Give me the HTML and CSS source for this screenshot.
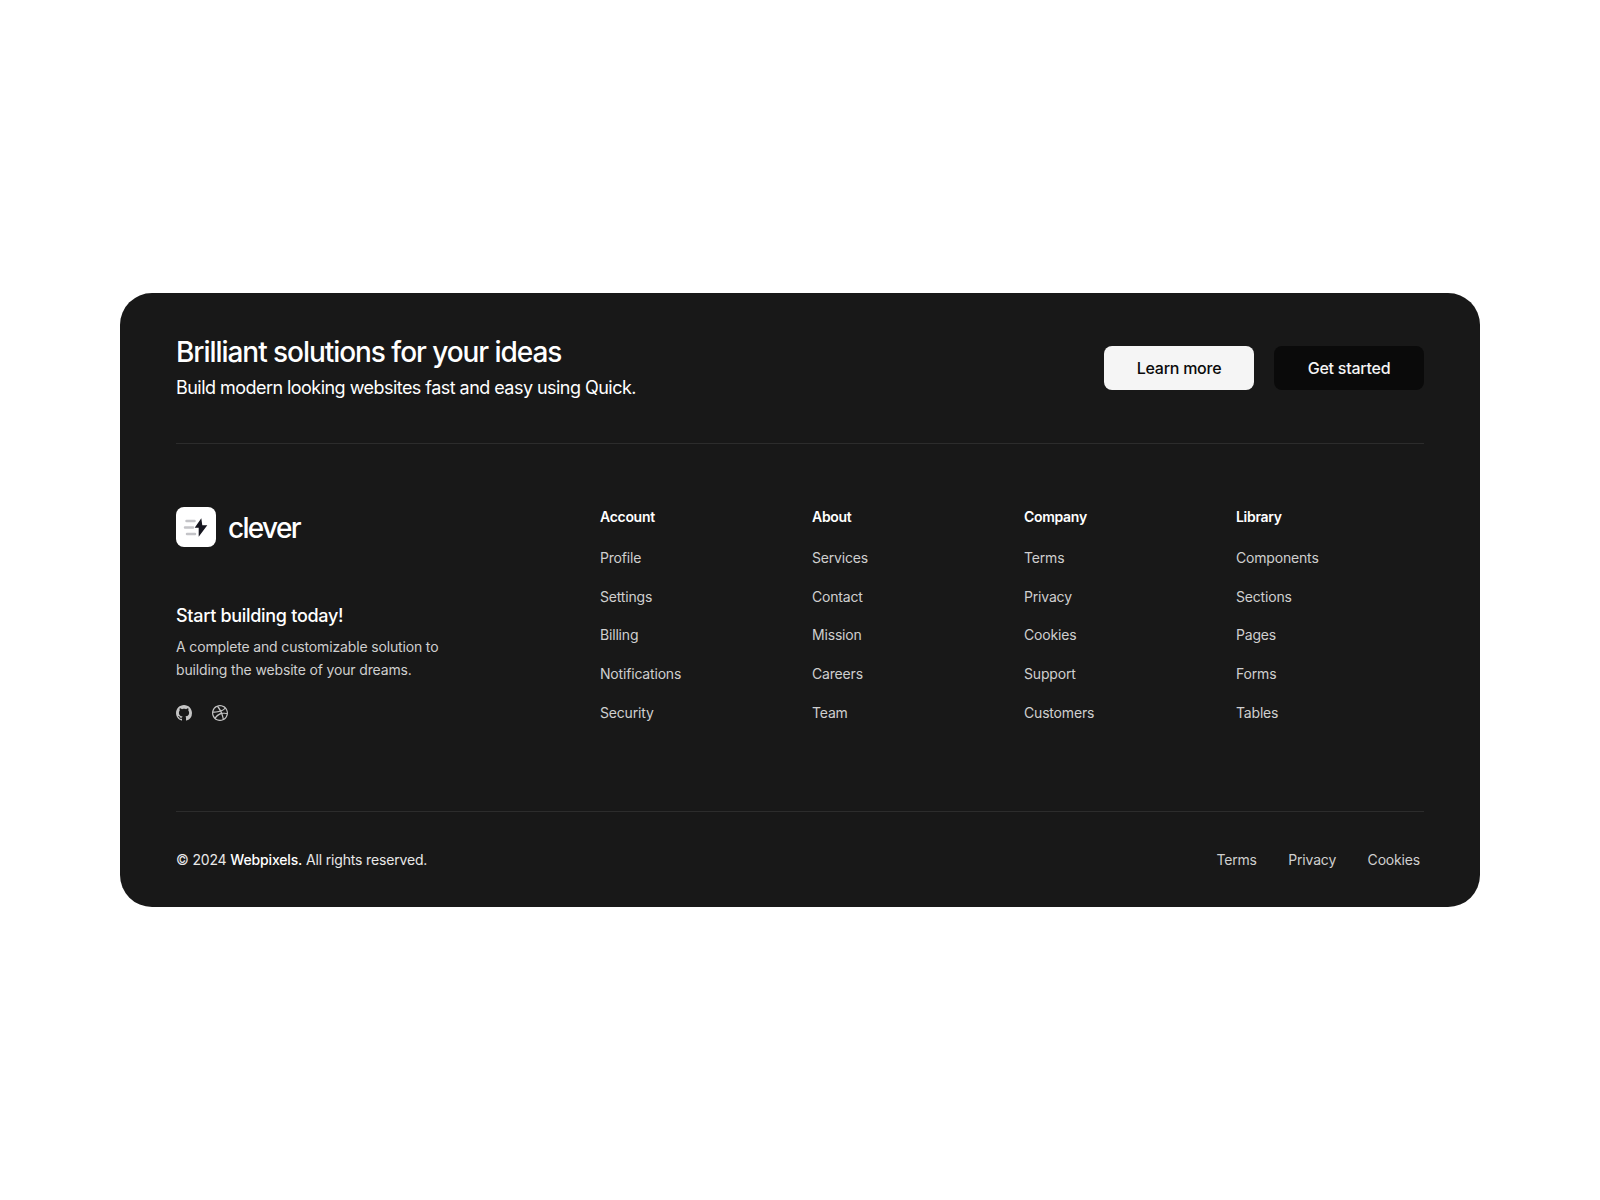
FILE: index.html
```html
<!DOCTYPE html>
<html lang="en">
<head>
<meta charset="utf-8">
<title>Footer</title>
<link rel="stylesheet" href="styles.css">
</head>
<body>
<footer class="card">
  <section class="cta">
    <div>
      <h2 class="cta-title">Brilliant solutions for your ideas</h2>
      <p class="cta-sub">Build modern looking websites fast and easy using Quick.</p>
    </div>
    <div class="cta-actions">
      <a class="btn btn-light">Learn more</a>
      <a class="btn btn-dark">Get started</a>
    </div>
  </section>
  <section class="main">
    <div class="brand">
      <div class="logo">
        <span class="logo-mark">
          <svg width="40" height="40" viewBox="0 0 40 40">
            <path d="M10.5 14h8M9 20.5h8M11 27h8" stroke="#c4c4c8" stroke-width="2.5" fill="none" stroke-linecap="round"/>
            <path d="M25.3 11.3 18.7 20.7h4V29.7L31.3 18.3h-5z" fill="#16161f"/>
          </svg>
        </span>
        <span class="logo-text">clever</span>
      </div>
      <h3 class="brand-title">Start building today!</h3>
      <p class="brand-text">A complete and customizable solution to<br>building the website of your dreams.</p>
      <div class="socials">
        <svg width="16" height="16" viewBox="0 0 16 16" fill="#c4c4c4"><path d="M8 0C3.58 0 0 3.58 0 8c0 3.54 2.29 6.53 5.47 7.59.4.07.55-.17.55-.38 0-.19-.01-.82-.01-1.49-2.01.37-2.53-.49-2.69-.94-.09-.23-.48-.94-.82-1.13-.28-.15-.68-.52-.01-.53.63-.01 1.08.58 1.23.82.72 1.21 1.87.87 2.33.66.07-.52.28-.87.51-1.07-1.78-.2-3.64-.89-3.64-3.95 0-.87.31-1.59.82-2.15-.08-.2-.36-1.02.08-2.12 0 0 .67-.21 2.2.82.64-.18 1.32-.27 2-.27.68 0 1.36.09 2 .27 1.53-1.04 2.2-.82 2.2-.82.44 1.1.16 1.92.08 2.12.51.56.82 1.27.82 2.15 0 3.07-1.87 3.75-3.65 3.95.29.25.54.73.54 1.48 0 1.07-.01 1.93-.01 2.2 0 .21.15.46.55.38A8.01 8.01 0 0 0 16 8c0-4.42-3.58-8-8-8z"/></svg>
        <svg width="16" height="16" viewBox="0 0 16 16" fill="#c4c4c4"><path fill-rule="evenodd" d="M8 0C3.584 0 0 3.584 0 8s3.584 8 8 8c4.408 0 8-3.584 8-8s-3.592-8-8-8zm5.284 3.688a6.802 6.802 0 0 1 1.545 4.251c-.226-.043-2.482-.503-4.755-.217-.052-.112-.096-.234-.148-.355-.139-.33-.295-.668-.451-.99 2.516-1.023 3.662-2.498 3.81-2.69zM8 1.18c1.735 0 3.323.65 4.53 1.718-.122.174-1.155 1.553-3.584 2.464-1.12-2.056-2.36-3.74-2.551-4A6.95 6.95 0 0 1 8 1.18zm-2.907.642A43.123 43.123 0 0 1 7.627 5.77c-3.193.85-6.013.833-6.317.833a6.865 6.865 0 0 1 3.783-4.78zM1.163 8.01V7.8c.295.01 3.61.053 7.02-.971.199.381.381.772.555 1.162l-.27.078c-3.522 1.137-5.396 4.243-5.553 4.504a6.817 6.817 0 0 1-1.752-4.564zM8 14.837a6.785 6.785 0 0 1-4.19-1.44c.12-.252 1.509-2.924 5.361-4.269.018-.009.026-.009.044-.017a28.246 28.246 0 0 1 1.457 5.18A6.722 6.722 0 0 1 8 14.837zm3.81-1.171c-.07-.417-.435-2.412-1.328-4.868 2.143-.338 4.017.217 4.251.295a6.774 6.774 0 0 1-2.924 4.573z"/></svg>
      </div>
    </div>
    <nav class="col">
      <h4 class="col-title">Account</h4>
      <a class="link">Profile</a><a class="link">Settings</a><a class="link">Billing</a><a class="link">Notifications</a><a class="link">Security</a>
    </nav>
    <nav class="col">
      <h4 class="col-title">About</h4>
      <a class="link">Services</a><a class="link">Contact</a><a class="link">Mission</a><a class="link">Careers</a><a class="link">Team</a>
    </nav>
    <nav class="col">
      <h4 class="col-title">Company</h4>
      <a class="link">Terms</a><a class="link">Privacy</a><a class="link">Cookies</a><a class="link">Support</a><a class="link">Customers</a>
    </nav>
    <nav class="col">
      <h4 class="col-title">Library</h4>
      <a class="link">Components</a><a class="link">Sections</a><a class="link">Pages</a><a class="link">Forms</a><a class="link">Tables</a>
    </nav>
  </section>
  <section class="bottom">
    <p class="copy">© 2024 <strong>Webpixels.</strong> All rights reserved.</p>
    <div class="legal">
      <a class="link">Terms</a><a class="link">Privacy</a><a class="link">Cookies</a>
    </div>
  </section>
</footer>
</body>
</html>
```

FILE: styles.css
```css
* { box-sizing: border-box; }
html, body { margin: 0; height: 100%; }
body {
  background: #fff;
  font-family: Inter, "Noto Sans", sans-serif;
  color: #fff;
  padding: 293px 120px 0;
  -webkit-font-smoothing: antialiased;
}
h2, h3, h4, p { margin: 0; }
.card {
  width: 1360px;
  height: 614px;
  background: #181818;
  border-radius: 32px;
  padding: 40px 56px 0;
}
.cta {
  display: flex;
  justify-content: space-between;
  align-items: center;
  padding-bottom: 40px;
  border-bottom: 1px solid #2c2c2c;
  box-sizing: content-box;
  height: 70px;
}
.cta-title {
  font-size: 28px;
  line-height: 36px;
  font-weight: 500;
  letter-spacing: -1.05px;
}
.cta-sub {
  font-size: 18px;
  line-height: 28px;
  margin-top: 4px;
  letter-spacing: -0.54px;
}
.cta-actions { display: flex; gap: 20px; }
.btn {
  width: 150px;
  height: 44px;
  display: flex;
  align-items: center;
  justify-content: center;
  border-radius: 8px;
  font-size: 16px;
  font-weight: 500;
  letter-spacing: -0.25px;
}
.btn-light { background: #f5f5f5; color: #0a0a0a; }
.btn-dark { background: #0a0a0a; color: #f5f5f5; }
.main {
  display: grid;
  grid-template-columns: 400px repeat(4, 188px);
  column-gap: 24px;
  padding-top: 62px;
  height: 368px;
  border-bottom: 1px solid #2c2c2c;
}
.brand { padding-top: 1px; }
.logo { display: flex; align-items: flex-start; gap: 12px; }
.logo-mark {
  width: 40px;
  height: 40px;
  background: #fff;
  border-radius: 8px;
  display: flex;
}
.logo-text { font-size: 28px; line-height: 40px; padding-top: 1px; font-weight: 500; letter-spacing: -1.7px; }
.brand-title { font-size: 18px; line-height: 28px; font-weight: 500; letter-spacing: -0.3px; margin-top: 54px; }
.brand-text { font-size: 14px; line-height: 22.75px; letter-spacing: -0.15px; color: #cfcfcf; margin-top: 6.3px; }
.socials { display: flex; gap: 20px; margin-top: 23px; }
.col { display: flex; flex-direction: column; align-items: flex-start; }
.col-title { font-size: 14px; line-height: 22.75px; font-weight: 600; letter-spacing: -0.3px; margin-bottom: 18px; }
.link { font-size: 14px; line-height: 22.75px; letter-spacing: -0.18px; color: #cfcfcf; }
.col .link { margin-bottom: 16px; }
.bottom {
  display: flex;
  justify-content: space-between;
  align-items: center;
  height: 95px;
}
.copy { font-size: 14px; color: #e8e8e8; letter-spacing: -0.16px; }
.copy strong { font-weight: 500; color: #fff; }
.legal { display: flex; gap: 31.5px; padding-right: 4px; padding-top: 1px; }
```
